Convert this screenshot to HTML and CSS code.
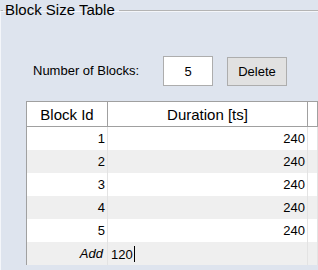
FILE: index.html
```html
<!DOCTYPE html>
<html>
<head>
  <link rel="stylesheet" href="styles.css">
</head>
<body>

  <fieldset class="group">
    <legend>Block Size Table</legend>

    <div class="controls">
      <label for="blockCount">Number of Blocks:</label>
      <input type="text" id="blockCount" value="5">
      <button class="delete-button">Delete</button>
    </div>

    <table id="blockTable">
      <thead>
        <tr>
          <th class="col-id">Block Id</th>
          <th class="col-duration">Duration [ts]</th>
          <th class="col-extra"></th>
        </tr>
      </thead>
      <tbody>
        <tr><td class="num">1</td><td class="num">240</td><td></td></tr>
        <tr><td class="num">2</td><td class="num">240</td><td></td></tr>
        <tr><td class="num">3</td><td class="num">240</td><td></td></tr>
        <tr><td class="num">4</td><td class="num">240</td><td></td></tr>
        <tr><td class="num">5</td><td class="num">240</td><td></td></tr>
        <tr class="add-row">
          <td class="num add-label">Add</td>
          <td class="add-value">120<span class="caret"></span></td>
          <td></td>
        </tr>
      </tbody>
    </table>
  </fieldset>

</body>
</html>
```

FILE: styles.css
```css
body {
  margin: 0;
  background-color: #dee4ee;
  font-family: "Liberation Sans", Arial, sans-serif;
  font-size: 13px;
  color: #000;
  overflow: hidden;
  height: 270px;
}
.group {
  box-sizing: border-box;
  margin: 2px 0 0 0;
  padding: 0;
  width: 100%;
  height: 268px;
  border: none;
  border-top: 1px solid #b4b4b4;
  border-left: 1px solid #f4f6fa;
  box-shadow: inset 0 1px 0 #f4f6fa;
  overflow: hidden;
}
.group legend {
  margin-left: 2px;
  padding: 0 4px 0 2px;
  line-height: 16px;
  font-size: 15px;
}
.controls {
  display: flex;
  align-items: flex-end;
  height: 30px;
  margin: 38px 0 0 32px;
}
.controls label {
  width: 130px;
  align-self: center;
  padding-bottom: 1px;
}
.controls input {
  box-sizing: border-box;
  width: 50px;
  height: 30px;
  border: 1px solid #adadad;
  background-color: #fff;
  font-family: inherit;
  font-size: 13px;
  text-align: center;
  padding: 0;
  margin: 0 14px 0 0;
}
.delete-button {
  box-sizing: border-box;
  width: 60px;
  height: 29px;
  border: 1px solid #adadad;
  background-color: #e1e1e1;
  font-family: inherit;
  font-size: 13px;
  color: #000;
  padding: 0;
}
table {
  border-collapse: collapse;
  margin: 15px 0 0 25px;
  table-layout: fixed;
  width: 292px;
}
th {
  height: 24px;
  padding: 0;
  font-weight: normal;
  font-size: 15px;
  background-color: #fff;
  border-top: 1px solid #a0a0a0;
  border-bottom: 1px solid #a0a0a0;
  border-right: 1px solid #a0a0a0;
}
th.col-id {
  width: 80px;
  border-left: 1px solid #a0a0a0;
}
th.col-duration {
  width: 199px;
}
td {
  height: 23px;
  padding: 0 2px;
  border-right: 1px solid #e3e3e3;
  background-color: #fff;
}
td:first-child {
  border-left: 1px solid #a0a0a0;
}
tbody tr:nth-child(even) td {
  background-color: #efefef;
}
.num {
  text-align: right;
}
.add-label {
  font-style: italic;
  padding-right: 4px;
}
.add-value {
  padding-left: 3px;
}
.caret {
  display: inline-block;
  width: 1px;
  height: 16px;
  background-color: #000;
  vertical-align: -3px;
  margin-left: 1px;
}
```
